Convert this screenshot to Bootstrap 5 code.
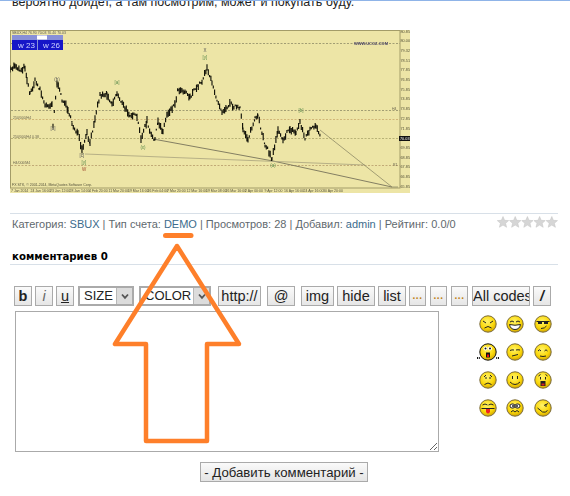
<!DOCTYPE html>
<html lang="ru"><head><meta charset="utf-8"><title>SBUX</title>
<link rel="stylesheet" href="https://cdn.jsdelivr.net/npm/bootstrap@5.3.0/dist/css/bootstrap.min.css">
<style>
html,body{height:496px;overflow:hidden;background:#fff}
body{font-family:"Liberation Sans",sans-serif;font-size:11px;color:#5f696e}
.sheet{position:relative;height:496px;overflow:hidden}
.topline{height:1px;background:#8fb4e8;position:relative;z-index:1}
.intro{margin:-7px 0 0 12px;height:16px;line-height:16px;font-size:12.5px;color:#222;white-space:nowrap}
.chartbox{margin:20px 0 0 10px;width:400px;height:163px}
.chartbox svg{display:block;filter:blur(.3px)}
.meta{margin:20px 12px 0 10px;border-top:1px solid #d8e0e8;height:30px;padding:2px 0 0 2px;line-height:17px;font-size:11px;white-space:nowrap}
.meta a{color:#3b6b8c;text-decoration:none}
.ctitle{margin:5px 12px 0 10px;border-bottom:1px solid #d8e0e8;height:17px;padding-left:2px;line-height:17px;font-family:"DejaVu Sans",sans-serif;font-weight:700;font-size:10.2px;color:#000}
.tools{margin:21px 0 0 14px;height:20px}
.tbtn{height:20px;padding:0;border:1.5px solid #aaa;border-radius:0;background:linear-gradient(#fafafa,#e6e6e6);color:#222;font:14.5px/17px "Liberation Sans",sans-serif;overflow:hidden;white-space:nowrap;flex:none}
.tbtn:hover{background:#eee;color:#222;border-color:#aaa}
.thin{color:#666}
.w18{width:18px}.w17{width:17px}.w43{width:43px}.w28{width:28px}.w33{width:33px}.w38{width:38px}.w58{width:58px}
.dots{font-size:10px;font-weight:700;color:#c07f10;padding-top:3px}
.ml3{margin-left:3px}.ml4{margin-left:4px}.ml5{margin-left:5px}.ml6{margin-left:6px}.ml7{margin-left:7px}
.selbox{height:20px;border:2px solid #aaa;background:#fff;flex:none;overflow:hidden}
.selbox select{appearance:none;border:0;background:#fff;outline:0;padding:0 0 0 4px;font:13px/16px "Liberation Sans",sans-serif;color:#222;min-width:0;flex:1;height:16px}
.selarrow{width:16px;height:16px;background:#dcdcdc;border-left:1px solid #b8b8b8;flex:none}
.s56{width:56px}.s72{width:72px}
.editrow{margin:5px 0 0 15px}
.tarea{width:424px;height:141px;border:1.5px solid #aaa;border-radius:0;flex:none;padding:2px;display:block}
.tarea:focus{box-shadow:none;border-color:#aaa}
.faces{display:grid;grid-template-columns:repeat(3,27.5px);grid-auto-rows:28px;margin:4px 0 0 35px}
.faces svg{display:block;margin:0 auto}
.sendrow{margin-top:10px;height:20px}
.sendbtn{margin-left:200px;width:168px;height:20px;padding:0;border:1.5px solid #aaa;border-radius:0;background:linear-gradient(#fafafa,#e4e4e4);color:#222;font:13.2px/17px "Liberation Sans",sans-serif;white-space:nowrap}
.overlay{position:absolute;left:0;top:0;pointer-events:none}
</style></head><body>
<svg width="0" height="0" class="d-block" style="position:absolute"><defs>
<radialGradient id="yg" cx=".45" cy=".35" r=".7"><stop offset="0" stop-color="#fff36a"/><stop offset=".6" stop-color="#fbd80a"/><stop offset="1" stop-color="#c79a00"/></radialGradient>
<g id="ball"><circle cx="9" cy="9" r="8.2" fill="url(#yg)" stroke="#7a6a3a" stroke-width="1"/></g>
</defs></svg>
<div class="sheet">
<div class="topline"></div>
<div class="intro">вероятно дойдет, а там посмотрим, может и покупать буду.</div>
<div class="chartbox"><svg id="chart" width="400" height="163" viewBox="10 31 400 163" xmlns="http://www.w3.org/2000/svg" font-family="Liberation Sans,sans-serif">
<rect x="10" y="31" width="400" height="163" fill="#ede5a6"/>
<rect x="10.5" y="31.5" width="389.5" height="157.5" fill="none" stroke="#a39c68" stroke-width="1"/>
<g stroke-dasharray="2 1.5" stroke-width=".8" fill="none">
<path d="M11 44.500H400" stroke="#8d8a66"/><path d="M11 111.500H400" stroke="#8d8a66"/>
<path d="M11 120.500H400" stroke="#c9a86a"/><path d="M11 139.500H400" stroke="#a9a46a"/><path d="M11 166.500H400" stroke="#b59a6a"/>
</g>
<path d="M153 140L273 162L392 188" stroke="#77735a" stroke-width=".9" fill="none"/>
<path d="M85 155L365 166" stroke="#a8a27e" stroke-width=".8" fill="none"/>
<path d="M320 131L392 188" stroke="#8e8a66" stroke-width=".8" fill="none"/>
<path d="M392 188H398" stroke="#8e8a66" stroke-width=".8"/>
<path id="price" d="" stroke="#14140a" stroke-width="1.150" fill="none"/>
<rect x="12" y="36" width="51" height="15" fill="#1616c8"/><rect x="12" y="36" width="51" height="5" fill="#8890d8"/><rect x="37" y="36.500" width="10" height="4" fill="#fff"/>
<rect x="37" y="41" width="1" height="10" fill="#8890d8"/>
<text x="18" y="49" font-size="8" fill="#cfd4ff">w 23</text><text x="43" y="49" font-size="8" fill="#cfd4ff">w 26</text>
<text x="12" y="35" font-size="3.500" fill="#555">SBUX,H4 76.90 70.03 70.40 70.03</text>
<text x="354" y="45.500" font-size="4" fill="#4a4466" font-weight="700">WWW.UCOZ.COM</text>
<g font-size="3.500" fill="#6b6650"><text x="13" y="120">250/000/H4</text><text x="13" y="139">250/000/H4 0.38</text><text x="13" y="165">H4/000/M4</text><text x="392" y="111">H4</text><text x="393" y="167">R1</text></g>
<g font-size="4.500" text-anchor="middle"><text x="205" y="53" fill="#555">X</text><text x="205" y="60" fill="#5a8a4a">[y]</text><text x="57" y="82" fill="#555">(b)</text><text x="117" y="85" fill="#5a8a4a">[a]</text><text x="53" y="131" fill="#555">[a]</text><text x="143" y="150" fill="#5a8a4a">(x)</text><text x="82" y="158" fill="#555">[c]</text><text x="84" y="165" fill="#5a8a4a">[y]</text><text x="84" y="172" fill="#a04a30">W</text><text x="273" y="168" fill="#5a8a4a">(a)</text><text x="301" y="113" fill="#5a8a4a">[b]</text></g>
<g id="yaxis" font-size="3.800" fill="#55523a"></g>
<rect x="399" y="137" width="11" height="5" fill="#111"/><text x="400" y="141" font-size="3.800" fill="#fff">70.03</text>
<g id="xaxis" font-size="3.500" fill="#55523a"></g>
<text x="12" y="187" font-size="3.500" fill="#55523a">FX STK, © 2001-2014, MetaQuotes Software Corp.</text>
</svg></div>
<div class="meta d-flex justify-content-between"><span>Категория: <a href="#">SBUX</a> | Тип счета: <a href="#">DEMO</a> | Просмотров: 28 | Добавил: <a href="#">admin</a> | Рейтинг: 0.0/0</span>
<svg width="61" height="13" viewBox="0 0 61 13" xmlns="http://www.w3.org/2000/svg"><defs><path id="st" d="M6 0.500L7.600 4.300L11.700 4.600L8.600 7.300L9.600 11.300L6 9.100L2.400 11.300L3.400 7.300L.3 4.600L4.400 4.300Z" fill="#d6d6d6" stroke="#c2c2c2" stroke-width=".5"/></defs><use href="#st" x="0"/><use href="#st" x="12.200"/><use href="#st" x="24.400"/><use href="#st" x="36.600"/><use href="#st" x="48.800"/></svg></div>
<div class="ctitle">комментариев 0</div>
<div class="tools d-flex">
<button class="btn tbtn w18 fw-bold" type="button">b</button>
<button class="btn tbtn thin w18 ml3 fst-italic" type="button">i</button>
<button class="btn tbtn w18 ml3 text-decoration-underline" type="button">u</button>
<div class="selbox s56 ml4 d-flex"><select aria-label="size"><option>SIZE</option></select><span class="selarrow d-flex align-items-center justify-content-center"><svg width="10" height="7" viewBox="0 0 10 7"><path d="M2 1.500L5 4.800L8 1.500" fill="none" stroke="#555" stroke-width="1.800"/></svg></span></div>
<div class="selbox s72 ml5 d-flex"><select aria-label="color"><option>COLOR</option></select><span class="selarrow d-flex align-items-center justify-content-center"><svg width="10" height="7" viewBox="0 0 10 7"><path d="M2 1.500L5 4.800L8 1.500" fill="none" stroke="#555" stroke-width="1.800"/></svg></span></div>
<button class="btn tbtn w43 ml7" type="button">http://</button>
<button class="btn tbtn w28 ml6" type="button">@</button>
<button class="btn tbtn w33 ml6" type="button">img</button>
<button class="btn tbtn w38 ml3" type="button">hide</button>
<button class="btn tbtn w28 ml3" type="button">list</button>
<button class="btn tbtn w17 ml3 dots" type="button">···</button>
<button class="btn tbtn w17 ml4 dots" type="button">···</button>
<button class="btn tbtn w17 ml4 dots" type="button">···</button>
<button class="btn tbtn w58 ml4" type="button">All codes</button>
<button class="btn tbtn w18 ml3 fst-italic fw-bold" type="button">/</button>
</div>
<div class="editrow d-flex">
<textarea class="form-control tarea" aria-label="comment"></textarea>
<div class="faces">
<svg width="18" height="18" viewBox="0 0 18 18"><use href="#ball"/><path d="M4 6l3 2M14 6l-3 2" stroke="#222" fill="none"/><path d="M5.500 13q3.500-3 7 0" stroke="#222" fill="none"/></svg>
<svg width="18" height="18" viewBox="0 0 18 18"><use href="#ball"/><path d="M4 7q2-2 4 0M10 7q2-2 4 0" stroke="#222" fill="none"/><path d="M3.500 9.500q5.500 1.500 11 0q-1 5-5.500 5t-5.500-5z" fill="#fff" stroke="#222"/></svg>
<svg width="18" height="18" viewBox="0 0 18 18"><use href="#ball"/><path d="M2.500 6.500h13" stroke="#222"/><rect x="4" y="6" width="4" height="3" fill="#222"/><rect x="10" y="6" width="4" height="3" fill="#222"/><path d="M7 13.500q4 0 5.500-2.500" stroke="#222" fill="none"/></svg>
<svg width="22" height="18" viewBox="-2 0 22 18" class="facewide"><circle cx="9" cy="9" r="8.200" fill="url(#yg)" stroke="#111"/><ellipse cx="6.500" cy="5.500" rx="2" ry="2" fill="#fff"/><ellipse cx="11" cy="5.500" rx="2" ry="2" fill="#fff"/><circle cx="6.500" cy="5.500" r="1" fill="#111"/><circle cx="11" cy="5.500" r="1" fill="#111"/><rect x="7" y="9.500" width="4" height="5" fill="#111"/><rect x="8" y="11.500" width="2" height="2.500" fill="#e11"/><path d="M-1.500 14v2M.3 14v2M17.700 14v2M19.500 14v2" stroke="#111"/></svg>
<svg width="18" height="18" viewBox="0 0 18 18"><use href="#ball"/><path d="M4 7.500q2-1 4-.5M10 7q2-.5 4 0" stroke="#222" fill="none"/><path d="M6 13l6-1.500" stroke="#222"/></svg>
<svg width="18" height="18" viewBox="0 0 18 18"><use href="#ball"/><path d="M4 8q1.500-2.500 3 0M10.500 8q1.500-2.500 3 0" stroke="#222" fill="none"/><path d="M6 13q3 1 6 0" stroke="#222" fill="none"/></svg>
<svg width="18" height="18" viewBox="0 0 18 18"><use href="#ball"/><path d="M5 6l2-2M13 6l-2-2M7 8V6M11 8V6" stroke="#222" fill="none"/><path d="M5.500 13.500q3.500-3 7 0" stroke="#222" fill="none"/></svg>
<svg width="18" height="18" viewBox="0 0 18 18"><use href="#ball"/><path d="M6.500 5v3M11.500 5v3" stroke="#222"/><path d="M4 11q5 5 10 0" stroke="#222" fill="none"/></svg>
<svg width="18" height="18" viewBox="0 0 18 18"><use href="#ball"/><path d="M4.500 5l2-1.500M13.500 5l-2-1.500M6.500 6v2.500M11.500 6v2.500" stroke="#222" fill="none"/><rect x="6.500" y="10" width="5" height="5" fill="#222"/><rect x="7.500" y="12.500" width="3" height="2" fill="#d22"/></svg>
<svg width="18" height="18" viewBox="0 0 18 18"><use href="#ball"/><path d="M3.500 6q2.500-2 5 0M9.500 6q2.500-2 5 0" stroke="#222" fill="none"/><path d="M2.500 9.500h13" stroke="#222"/><path d="M7 10h4v3q-2 3-4 0z" fill="#e22"/></svg>
<svg width="18" height="18" viewBox="0 0 18 18"><use href="#ball"/><rect x="4" y="5" width="5" height="4" rx="2" fill="#fff" stroke="#222"/><rect x="9" y="5" width="5" height="4" rx="2" fill="#fff" stroke="#222"/><circle cx="7" cy="7" r="1" fill="#222"/><circle cx="11" cy="7" r="1" fill="#222"/><path d="M5 13l2-1.500 2 1.500 2-1.500 2 1.500" stroke="#222" fill="none"/></svg>
<svg width="18" height="18" viewBox="0 0 18 18"><use href="#ball"/><path d="M10 6.500l4-2M12 5v3" stroke="#222" fill="none"/><path d="M3.500 9l5 4q3 1 5-1.500" stroke="#222" fill="none"/></svg>
</div></div>
<div class="sendrow"><button class="btn sendbtn" type="button">- Добавить комментарий -</button></div>
<svg class="overlay" width="570" height="496" viewBox="0 0 570 496" xmlns="http://www.w3.org/2000/svg"><g fill="none" stroke="#fe7f2a" stroke-linejoin="round" stroke-linecap="round"><path d="M165.500 235.500H191" stroke-width="5"/><path d="M177 246L115 344H146V441H207V344H239Z" stroke-width="4.500"/></g></svg>
</div>
<script>
(function(){
var k=[[10,72],[15,66],[20,71],[25,68],[27,80],[30,95],[35,82],[40,90],[45,107],[52,105],[53,125],[57,84],[62,100],[68,110],[72,125],[78,135],[82,152],[87,135],[90,145],[95,118],[100,96],[107,95],[112,105],[117,94],[125,110],[130,115],[137,118],[141,140],[147,122],[150,135],[155,140],[158,123],[163,132],[167,115],[175,105],[178,90],[185,92],[190,98],[197,88],[202,82],[207,68],[212,85],[217,100],[222,112],[230,105],[240,110],[243,130],[248,140],[255,120],[258,118],[265,145],[272,160],[278,130],[283,140],[290,130],[296,134],[300,122],[305,140],[310,130],[316,128],[320,138]];
var s=7,d="";function r(){s=(s*16807)%2147483647;return s/2147483647;}
for(var i=0;i<k.length-1;i++){var a=k[i],b=k[i+1];for(var x=a[0];x<b[0];x+=1.3){var t=(x-a[0])/(b[0]-a[0]),y=a[1]+(b[1]-a[1])*t+(r()-.5)*4,h=.8+r()*3;d+="M"+x.toFixed(1)+" "+(y-h).toFixed(1)+"V"+(y+h).toFixed(1);}}
document.getElementById("price").setAttribute("d",d);
var Y=[80.85,80.00,79.32,78.51,77.85,76.85,75.85,74.85,73.85,72.85,71.85,70.85,69.85,68.85,67.85,66.85,65.85],ya=document.getElementById("yaxis"),X=document.getElementById("xaxis"),h2="";
for(i=0;i<Y.length;i++){if(i==11)continue;h2+='<text x="400.500" y="'+(33.5+i*9.7).toFixed(1)+'">'+Y[i].toFixed(2)+"</text>";}
ya.innerHTML=h2;h2="";
var L=["7 Jan 2014","24 Jan 16:00","23 Jan 12:00","28 Jan 14:00","4 Feb 20:00","11 Mar 20:00","19 Mar 16:00","26 Feb 04:00","7 Mar 20:00","12 Mar 16:00","19 Mar 08:00","26 Mar 16:00","2 Apr 00:00","9 Apr 12:00","16 Apr 16:00","24 Apr 16:00","30 Apr 20:00"];
for(i=0;i<L.length;i++){h2+='<text x="'+(11+i*19.5).toFixed(1)+'" y="193">'+L[i]+"</text>";}
X.innerHTML=h2;
})();
</script>
<script src="https://cdn.jsdelivr.net/npm/bootstrap@5.3.0/dist/js/bootstrap.bundle.min.js"></script>
</body></html>
